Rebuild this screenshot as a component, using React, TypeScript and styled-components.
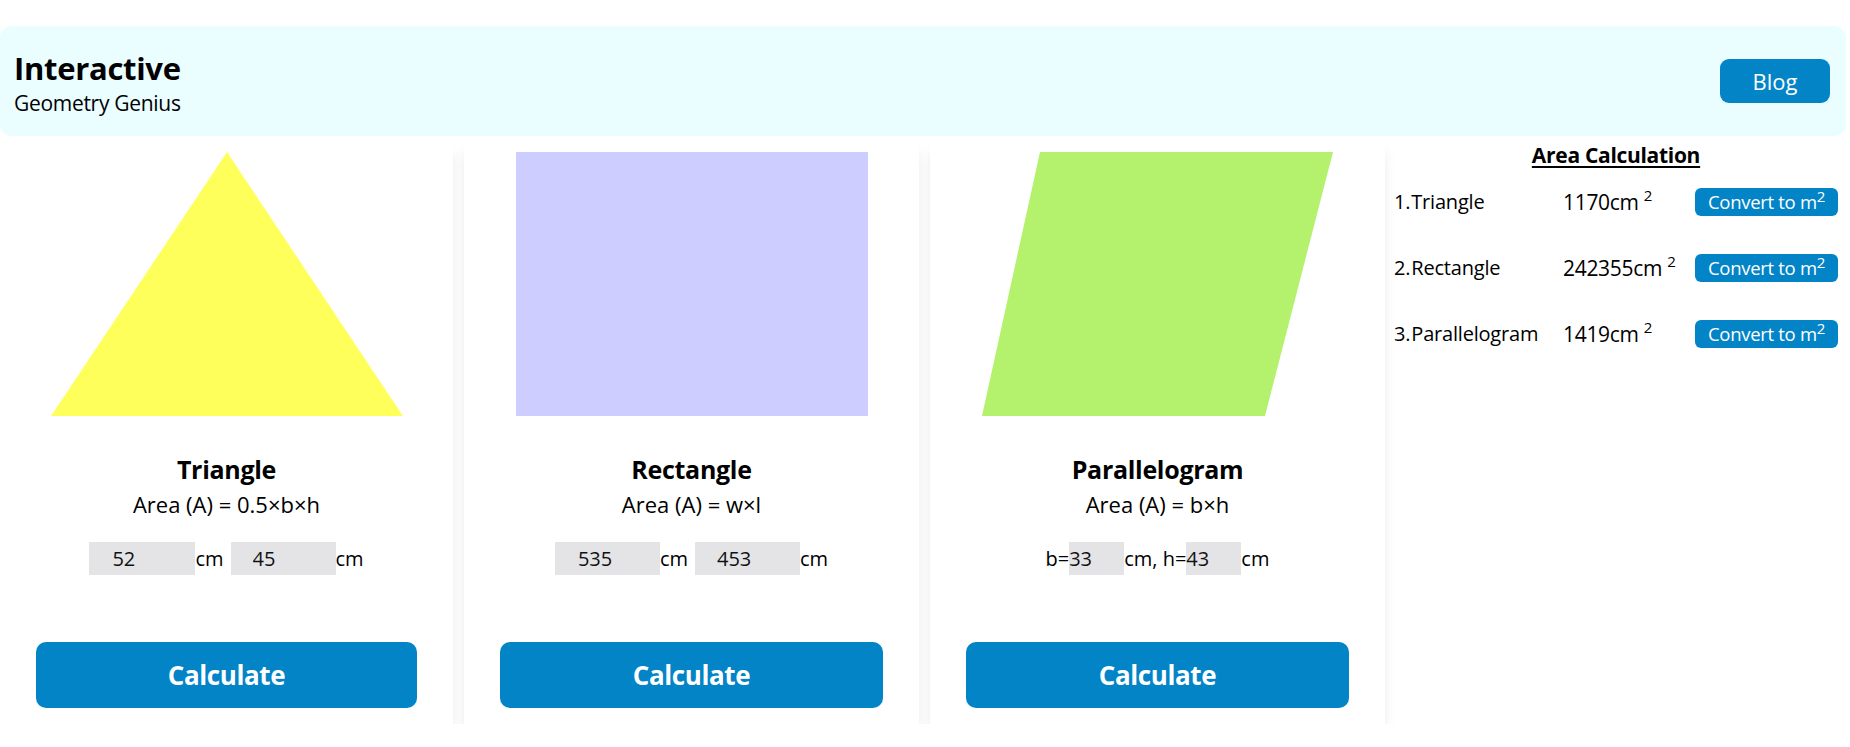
import React from "react";
import styled, { createGlobalStyle } from "styled-components";

const Global = createGlobalStyle`
  html, body { margin: 0; padding: 0; background: #ffffff; }
  body { font-family: "Open Sans", "Noto Sans", sans-serif; color: #000; }
  * { box-sizing: border-box; }
`;

const Page = styled.div`
  padding: 26px 4px 0 0;
  width: 1850px;
`;

const Header = styled.header`
  height: 110px;
  background: #eafdff;
  border-radius: 12px;
  display: flex;
  align-items: center;
  justify-content: space-between;
  padding: 4px 16px 0 14px;
`;

const Brand = styled.div`
  display: flex;
  flex-direction: column;
`;

const BrandTitle = styled.h1`
  margin: 2px 0 0;
  font-size: 31px;
  font-weight: 700;
  line-height: 38px;
  letter-spacing: -0.3px;
`;

const BrandSub = styled.div`
  font-size: 21px;
  line-height: 32px;
  letter-spacing: -0.3px;
`;

const BlogButton = styled.button`
  width: 110px;
  height: 44px;
  margin-top: -4px;
  border: none;
  border-radius: 9px;
  background: #0284c7;
  color: #fff;
  font-family: inherit;
  font-size: 22px;
  cursor: pointer;
`;

const Main = styled.main`
  display: flex;
  margin-top: 4px;
  gap: 11px;
`;

const Card = styled.section<{ $w: number }>`
  width: ${(p) => p.$w}px;
  height: 584px;
  background: #fff;
  box-shadow: 0 10px 15px -3px rgba(0, 0, 0, 0.1), 0 4px 6px -4px rgba(0, 0, 0, 0.1);
  display: flex;
  flex-direction: column;
  align-items: center;
  padding: 12px 36px 16px;
`;

const ShapeBox = styled.div`
  width: 352px;
  height: 264px;
  flex: none;
`;

const ShapeTitle = styled.h2`
  margin: 36px 0 0;
  font-size: 25px;
  font-weight: 700;
  line-height: 34px;
  letter-spacing: -0.3px;
`;

const Formula = styled.div`
  font-size: 22px;
  line-height: 36px;
`;

const InputRow = styled.div`
  margin-top: 20px;
  display: flex;
  align-items: center;
  font-size: 20px;
  line-height: 27px;
`;

const NumInput = styled.input<{ $w: number; $pad: number }>`
  width: ${(p) => p.$w}px;
  height: 33px;
  border: none;
  outline: none;
  border-radius: 0;
  background: #e4e4e7;
  font-family: inherit;
  font-size: 20px;
  color: #111;
  padding: 0 0 0 ${(p) => p.$pad}px;
`;

const Unit = styled.span<{ $gap?: number }>`
  margin-right: ${(p) => p.$gap ?? 0}px;
`;

const CalcButton = styled.button`
  margin-top: auto;
  width: 100%;
  height: 66px;
  border: none;
  border-radius: 10px;
  background: #0284c7;
  color: #fff;
  font-family: inherit;
  font-size: 26px;
  font-weight: 700;
  letter-spacing: -0.4px;
  cursor: pointer;
`;

const Panel = styled.aside`
  flex: 1;
  margin-left: -11px;
  height: 584px;
  padding: 2px 8px 0 9px;
`;

const PanelTitle = styled.h3`
  margin: 0;
  text-align: center;
  font-size: 21px;
  font-weight: 700;
  line-height: 26px;
  text-decoration: underline;
  text-underline-offset: 3px;
  letter-spacing: -0.3px;
`;

const ResultList = styled.div`
  display: grid;
  grid-template-columns: 169px 132px 143px;
  grid-auto-rows: 28px;
  row-gap: 38px;
  margin-top: 20px;
  align-items: center;
`;

const RowLabel = styled.div`
  font-size: 20px;
  line-height: 28px;
  letter-spacing: -0.2px;
  display: flex;
  white-space: nowrap;
`;

const Num = styled.span`
  margin-right: 1px;
`;

const Value = styled.div`
  font-size: 21px;
  line-height: 28px;
  letter-spacing: -0.3px;
  white-space: nowrap;
  sup {
    font-size: 15px;
    line-height: 0;
    vertical-align: 9px;
    margin-left: 5px;
  }
`;

const ConvertButton = styled.button`
  width: 143px;
  height: 28px;
  border: none;
  border-radius: 6px;
  background: #0284c7;
  color: #fff;
  font-family: inherit;
  font-size: 18.5px;
  line-height: 28px;
  padding: 0;
  letter-spacing: -0.3px;
  white-space: nowrap;
  cursor: pointer;
  sup {
    font-size: 15px;
    vertical-align: 7px;
    line-height: 0;
  }
`;

const Triangle = () => (
  <ShapeBox>
    <svg width="352" height="264" viewBox="0 0 352 264">
      <polygon points="176,0 352,264 0,264" fill="#ffff5c" />
    </svg>
  </ShapeBox>
);

const Rect = () => (
  <ShapeBox>
    <svg width="352" height="264" viewBox="0 0 352 264">
      <rect x="0" y="0" width="352" height="264" fill="#cdcdff" />
    </svg>
  </ShapeBox>
);

const Para = () => (
  <ShapeBox>
    <svg width="352" height="264" viewBox="0 0 352 264">
      <polygon points="58,0 351,0 283,264 0,264" fill="#b4f16c" />
    </svg>
  </ShapeBox>
);

const results = [
  { n: "1.", name: "Triangle", v: "1170" },
  { n: "2.", name: "Rectangle", v: "242355" },
  { n: "3.", name: "Parallelogram", v: "1419" },
];

export default function App() {
  return (
    <>
      <Global />
      <Page>
        <Header>
          <Brand>
            <BrandTitle>Interactive</BrandTitle>
            <BrandSub>Geometry Genius</BrandSub>
          </Brand>
          <BlogButton>Blog</BlogButton>
        </Header>
        <Main>
          <Card $w={453}>
            <Triangle />
            <ShapeTitle>Triangle</ShapeTitle>
            <Formula>Area (A) = 0.5×b×h</Formula>
            <InputRow>
              <NumInput $w={106} $pad={23} defaultValue="52" />
              <Unit $gap={7}>cm</Unit>
              <NumInput $w={105} $pad={22} defaultValue="45" />
              <Unit>cm</Unit>
            </InputRow>
            <CalcButton>Calculate</CalcButton>
          </Card>
          <Card $w={455}>
            <Rect />
            <ShapeTitle>Rectangle</ShapeTitle>
            <Formula>Area (A) = w×l</Formula>
            <InputRow>
              <NumInput $w={105} $pad={23} defaultValue="535" />
              <Unit $gap={7}>cm</Unit>
              <NumInput $w={105} $pad={22} defaultValue="453" />
              <Unit>cm</Unit>
            </InputRow>
            <CalcButton>Calculate</CalcButton>
          </Card>
          <Card $w={455}>
            <Para />
            <ShapeTitle>Parallelogram</ShapeTitle>
            <Formula>Area (A) = b×h</Formula>
            <InputRow>
              <span>b=</span>
              <NumInput $w={55} $pad={0} defaultValue="33" />
              <span>cm, h=</span>
              <NumInput $w={55} $pad={0} defaultValue="43" />
              <span>cm</span>
            </InputRow>
            <CalcButton>Calculate</CalcButton>
          </Card>
          <Panel>
            <PanelTitle>Area Calculation</PanelTitle>
            <ResultList>
              {results.map((r) => (
                <React.Fragment key={r.n}>
                  <RowLabel>
                    <Num>{r.n}</Num>
                    {r.name}
                  </RowLabel>
                  <Value>
                    {r.v}cm<sup>2</sup>
                  </Value>
                  <ConvertButton>
                    Convert to m<sup>2</sup>
                  </ConvertButton>
                </React.Fragment>
              ))}
            </ResultList>
          </Panel>
        </Main>
      </Page>
    </>
  );
}
